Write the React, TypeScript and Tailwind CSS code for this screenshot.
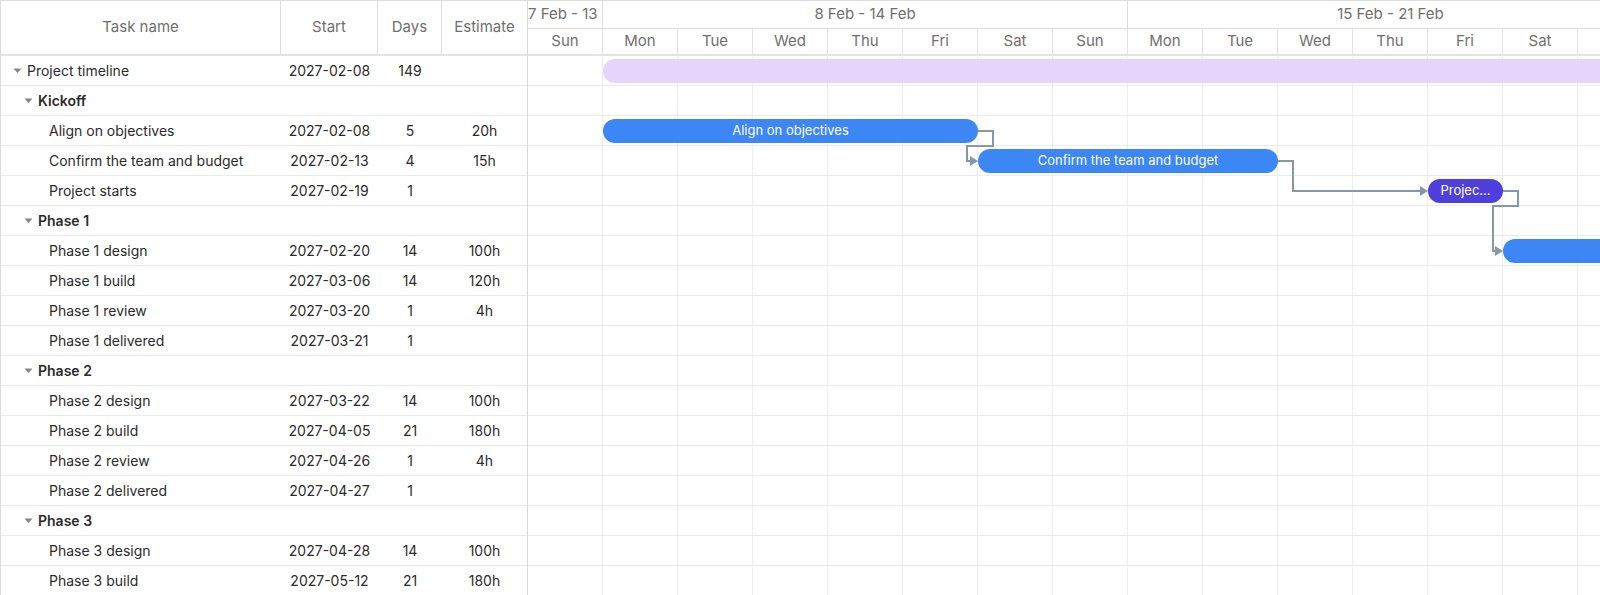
import React from "react";

type Row = {
  name: string;
  level: 0 | 1 | 2;
  start?: string;
  days?: number;
  est?: string;
};

const ROWS: Row[] = [
  { name: "Project timeline", level: 0, start: "2027-02-08", days: 149 },
  { name: "Kickoff", level: 1 },
  { name: "Align on objectives", level: 2, start: "2027-02-08", days: 5, est: "20h" },
  { name: "Confirm the team and budget", level: 2, start: "2027-02-13", days: 4, est: "15h" },
  { name: "Project starts", level: 2, start: "2027-02-19", days: 1 },
  { name: "Phase 1", level: 1 },
  { name: "Phase 1 design", level: 2, start: "2027-02-20", days: 14, est: "100h" },
  { name: "Phase 1 build", level: 2, start: "2027-03-06", days: 14, est: "120h" },
  { name: "Phase 1 review", level: 2, start: "2027-03-20", days: 1, est: "4h" },
  { name: "Phase 1 delivered", level: 2, start: "2027-03-21", days: 1 },
  { name: "Phase 2", level: 1 },
  { name: "Phase 2 design", level: 2, start: "2027-03-22", days: 14, est: "100h" },
  { name: "Phase 2 build", level: 2, start: "2027-04-05", days: 21, est: "180h" },
  { name: "Phase 2 review", level: 2, start: "2027-04-26", days: 1, est: "4h" },
  { name: "Phase 2 delivered", level: 2, start: "2027-04-27", days: 1 },
  { name: "Phase 3", level: 1 },
  { name: "Phase 3 design", level: 2, start: "2027-04-28", days: 14, est: "100h" },
  { name: "Phase 3 build", level: 2, start: "2027-05-12", days: 21, est: "180h" },
];

// Visible day columns; the trailing one is only partly in view
const DAYS = ["Sun", "Mon", "Tue", "Wed", "Thu", "Fri", "Sat", "Sun", "Mon", "Tue", "Wed", "Thu", "Fri", "Sat", ""];
const COL = 75;
const ROW_H = 30;

type Bar = { row: number; from: number; span: number; label?: string; kind: "summary" | "task" | "milestone" };

const BARS: Bar[] = [
  { row: 0, from: 1, span: 149, kind: "summary" },
  { row: 2, from: 1, span: 5, label: "Align on objectives", kind: "task" },
  { row: 3, from: 6, span: 4, label: "Confirm the team and budget", kind: "task" },
  { row: 4, from: 12, span: 1, label: "Projec...", kind: "milestone" },
  { row: 6, from: 13, span: 14, kind: "task" },
];

// Elbow connectors between dependent bars (gantt body coordinates)
const LINKS: string[] = [
  "M450 75 H465 V90 H439 V105 H443",
  "M750 105 H765 V135 H893",
  "M975 135 H990 V150 H965 V195 H968",
];
const HEADS: [number, number][] = [
  [450, 105],
  [900, 135],
  [975, 195],
];

function Caret() {
  return (
    <svg width="9" height="6" viewBox="0 0 9 6" className="shrink-0">
      <path d="M0.5 0.5 H8.5 L4.5 5 Z" fill="#858585" />
    </svg>
  );
}

function LeftPanel() {
  return (
    <div className="w-[527px] shrink-0 border-r border-[#d9d9d9] flex flex-col">
      <div className="h-[55px] shrink-0 border-b-2 border-[#e3e3e3] grid grid-cols-[280px_97px_64px_85px] text-[15px] text-[#6f6f6f]">
        <div className="flex items-center justify-center border-r border-[#dcdcdc]">Task name</div>
        <div className="flex items-center justify-center border-r border-[#dcdcdc]">Start</div>
        <div className="flex items-center justify-center border-r border-[#dcdcdc]">Days</div>
        <div className="flex items-center justify-center">Estimate</div>
      </div>
      {ROWS.map((r, i) => (
        <div
          key={i}
          className="h-[30px] shrink-0 border-b border-[#ececec] grid grid-cols-[280px_97px_64px_85px] text-[14px] text-[#2b2b2b]"
        >
          <div className="flex items-center">
            {r.level === 0 && (
              <div className="flex items-center gap-[5px] pl-[12px]">
                <Caret />
                <span>{r.name}</span>
              </div>
            )}
            {r.level === 1 && (
              <div className="flex items-center gap-[5px] pl-[23px] font-semibold">
                <Caret />
                <span>{r.name}</span>
              </div>
            )}
            {r.level === 2 && <span className="pl-[48px]">{r.name}</span>}
          </div>
          <div className="flex items-center justify-center">{r.start ?? ""}</div>
          <div className="flex items-center justify-center">{r.days ?? ""}</div>
          <div className="flex items-center justify-center">{r.est ?? ""}</div>
        </div>
      ))}
    </div>
  );
}

function BarView({ b }: { b: Bar }) {
  const left = b.from * COL;
  const width = b.span * COL;
  const base = "absolute h-[24px] rounded-full flex items-center justify-center text-[13px] text-white whitespace-nowrap overflow-hidden";
  const tone =
    b.kind === "summary"
      ? "bg-[#e6d4fb]"
      : b.kind === "milestone"
      ? "bg-[#4f3fdc]"
      : "bg-[#3d86f5]";
  return (
    <div className={`${base} ${tone}`} style={{ left, width, top: b.row * ROW_H + 3 }}>
      {b.label && <span className="px-2 truncate">{b.label}</span>}
    </div>
  );
}

function Timeline() {
  return (
    <div className="flex-1 overflow-hidden">
      <div className="w-[1125px] flex flex-col">
        <div className="h-[55px] shrink-0 border-b-2 border-[#e3e3e3] flex flex-col text-[15px] text-[#6f6f6f]">
          <div className="h-[28px] shrink-0 flex border-b border-[#dcdcdc]">
            <div className="w-[75px] shrink-0 border-r border-[#dcdcdc] overflow-hidden whitespace-nowrap flex items-center">
              7 Feb - 13
            </div>
            <div className="w-[525px] shrink-0 border-r border-[#dcdcdc] flex items-center justify-center">
              8 Feb - 14 Feb
            </div>
            <div className="w-[525px] shrink-0 flex items-center justify-center">15 Feb - 21 Feb</div>
          </div>
          <div className="flex-1 flex">
            {DAYS.map((d, i) => (
              <div key={i} className="w-[75px] shrink-0 border-r border-[#e3e3e3] flex items-center justify-center">
                {d}
              </div>
            ))}
          </div>
        </div>
        <div className="relative">
          {ROWS.map((_, i) => (
            <div key={i} className="h-[30px] shrink-0 flex border-b border-[#ececec]">
              {DAYS.map((_, j) => (
                <div key={j} className="w-[75px] shrink-0 border-r border-[#efefef]" />
              ))}
            </div>
          ))}
          {BARS.map((b, i) => (
            <BarView key={i} b={b} />
          ))}
          <svg className="absolute left-0 top-0" width="1125" height="540" viewBox="0 0 1125 540">
            {LINKS.map((d, i) => (
              <path key={i} d={d} fill="none" stroke="#8797aa" strokeWidth="2" />
            ))}
            {HEADS.map(([x, y], i) => (
              <path key={i} d={`M${x} ${y} L${x - 8} ${y - 5} L${x - 8} ${y + 5} Z`} fill="#8797aa" />
            ))}
          </svg>
        </div>
      </div>
    </div>
  );
}

export default function App() {
  return (
    <div
      className="w-[1600px] h-[595px] overflow-hidden bg-white flex border-t border-l border-[#dcdcdc]"
      style={{ fontFamily: "Inter, 'Noto Sans', sans-serif" }}
    >
      <LeftPanel />
      <Timeline />
    </div>
  );
}
